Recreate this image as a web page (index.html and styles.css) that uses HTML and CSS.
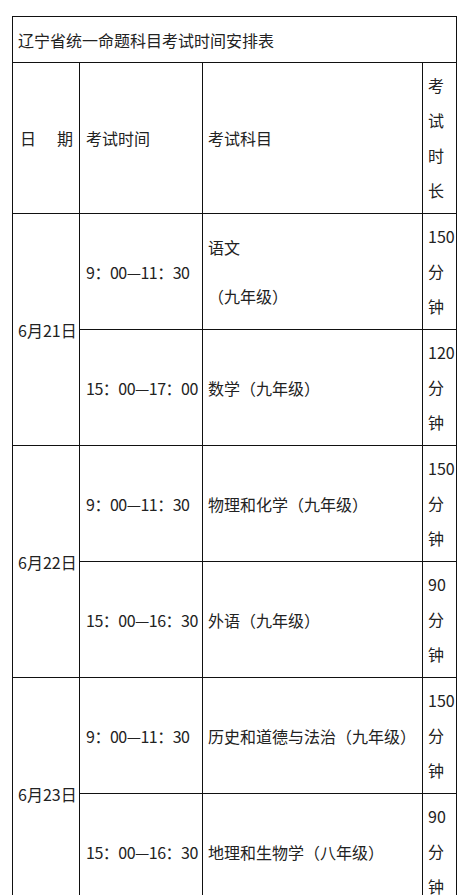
FILE: index.html
```html
<!DOCTYPE html>
<html lang="zh-CN">
<head>
<meta charset="utf-8">
<title>辽宁省统一命题科目考试时间安排表</title>
<link rel="stylesheet" href="styles.css">
</head>
<body>
<div class="page">
<table class="schedule">
  <colgroup>
    <col class="c-date">
    <col class="c-time">
    <col class="c-subj">
    <col class="c-dur">
  </colgroup>
  <tr class="r-title">
    <td colspan="4" class="title">辽宁省统一命题科目考试时间安排表</td>
  </tr>
  <tr class="r-head">
    <td class="date"><span class="spread"><span>日</span><span>期</span></span></td>
    <td class="time head">考试时间</td>
    <td class="subj">考试科目</td>
    <td class="dur">考<br>试<br>时<br>长</td>
  </tr>
  <tr class="r-data">
    <td rowspan="2" class="date">6月21日</td>
    <td class="time">9：00—11：30</td>
    <td class="subj"><div class="two-line">语文<br>（九年级）</div></td>
    <td class="dur">150<br>分<br>钟</td>
  </tr>
  <tr class="r-data">
    <td class="time">15：00—17：00</td>
    <td class="subj">数学（九年级）</td>
    <td class="dur">120<br>分<br>钟</td>
  </tr>
  <tr class="r-data">
    <td rowspan="2" class="date">6月22日</td>
    <td class="time">9：00—11：30</td>
    <td class="subj">物理和化学（九年级）</td>
    <td class="dur">150<br>分<br>钟</td>
  </tr>
  <tr class="r-data">
    <td class="time">15：00—16：30</td>
    <td class="subj">外语（九年级）</td>
    <td class="dur">90<br>分<br>钟</td>
  </tr>
  <tr class="r-data">
    <td rowspan="2" class="date">6月23日</td>
    <td class="time">9：00—11：30</td>
    <td class="subj">历史和道德与法治（九年级）</td>
    <td class="dur">150<br>分<br>钟</td>
  </tr>
  <tr class="r-data">
    <td class="time">15：00—16：30</td>
    <td class="subj">地理和生物学（八年级）</td>
    <td class="dur">90<br>分<br>钟</td>
  </tr>
</table>
</div>
</body>
</html>
```
FILE: styles.css
```css
html, body {
  margin: 0;
  padding: 0;
  background: #ffffff;
}
body {
  font-family: "Noto Sans CJK SC", "Noto Sans", sans-serif;
  font-size: 16px;
  color: #222222;
  overflow: hidden;
}
.page {
  padding: 16px 0 0 12px;
}
.schedule {
  border-collapse: collapse;
  table-layout: fixed;
  width: 444px;
}
.c-date { width: 67px; }
.c-time { width: 123px; }
.c-subj { width: 220px; }
.c-dur { width: 34px; }
.schedule td {
  border: 1px solid #111;
  padding: 0 5px;
  vertical-align: middle;
  line-height: 22px;
  white-space: nowrap;
  overflow: hidden;
}
.r-title { height: 46px; }
.r-head { height: 151px; }
.r-data { height: 116px; }
.title {
  padding-left: 4px;
}
.spread {
  display: flex;
  justify-content: space-between;
  padding: 0 1px 0 2px;
}
.schedule td.time {
  padding-left: 6px;
  letter-spacing: -0.5px;
}
.schedule td.time.head {
  letter-spacing: 0;
}
.schedule td.dur {
  line-height: 35px;
  padding: 0 0 0 5px;
}
.two-line {
  line-height: 49px;
}
```
